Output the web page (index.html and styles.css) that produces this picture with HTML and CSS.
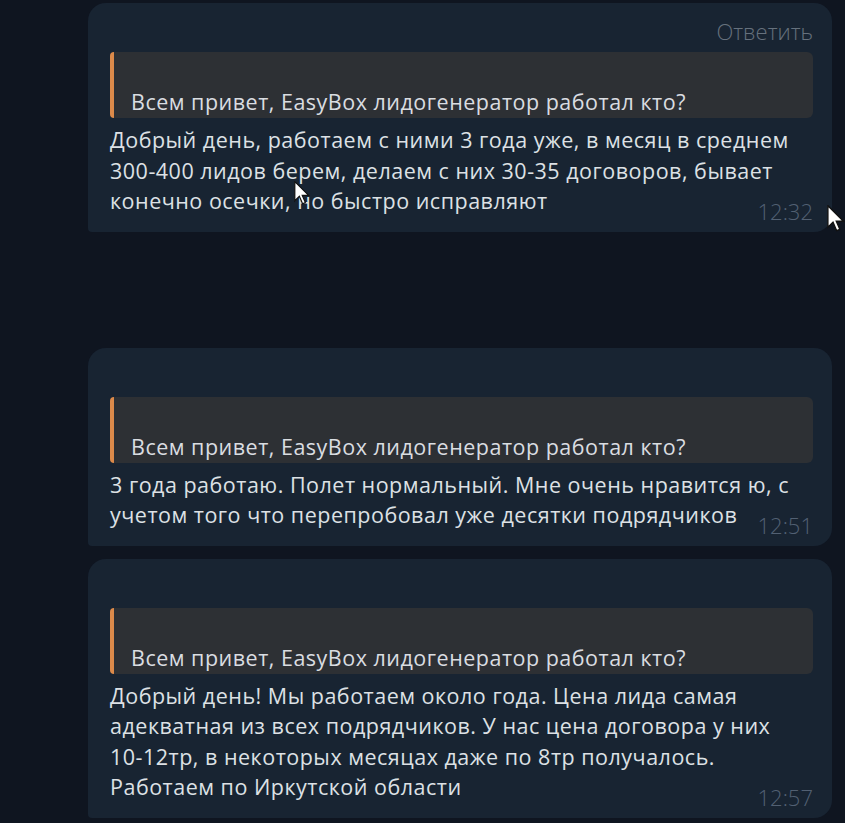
FILE: index.html
```html
<!DOCTYPE html>
<html lang="ru">
<head>
<meta charset="UTF-8">
<title>Отзывы</title>
<link rel="stylesheet" href="styles.css">
</head>
<body>
  <div class="chat">
    <div class="bubble first">
      <div class="bubble-head">Ответить</div>
      <div class="quote">Всем привет, EasyBox лидогенератор работал кто?</div>
      <p class="text">Добрый день, работаем с ними 3 года уже, в месяц в среднем<br>300-400 лидов берем, делаем с них 30-35 договоров, бывает<br>конечно осечки, но быстро исправляют</p>
      <div class="time">12:32</div>
    </div>

    <div class="bubble second">
      <div class="bubble-head"></div>
      <div class="quote">Всем привет, EasyBox лидогенератор работал кто?</div>
      <p class="text">3 года работаю. Полет нормальный. Мне очень нравится ю, с<br>учетом того что перепробовал уже десятки подрядчиков</p>
      <div class="time">12:51</div>
    </div>

    <div class="bubble third">
      <div class="bubble-head"></div>
      <div class="quote">Всем привет, EasyBox лидогенератор работал кто?</div>
      <p class="text">Добрый день! Мы работаем около года. Цена лида самая<br>адекватная из всех подрядчиков. У нас цена договора у них<br>10-12тр, в некоторых месяцах даже по 8тр получалось.<br>Работаем по Иркутской области</p>
      <div class="time">12:57</div>
    </div>
  </div>

  <!-- mouse pointers captured in the screenshot -->
  <svg class="cursor cursor-one" width="16" height="24" viewBox="0 0 13 20">
    <path d="M0.5 0.5 L0.5 16.5 L4.3 12.8 L7 19 L9.3 18 L6.7 12 L12 12 Z" fill="#ffffff" stroke="#111111" stroke-width="1"/>
  </svg>
  <svg class="cursor cursor-two" width="18" height="27" viewBox="0 0 13 20">
    <path d="M0.5 0.5 L0.5 16.5 L4.3 12.8 L7 19 L9.3 18 L6.7 12 L12 12 Z" fill="#ffffff" stroke="#111111" stroke-width="1"/>
  </svg>
</body>
</html>
```

FILE: styles.css
```css
/* page background, dark telegram theme */
body {
  margin: 0;
  background-color: #0f1520;
  font-family: "Open Sans", "Noto Sans", sans-serif;
  color: #dde1e5;
  height: 823px;
  overflow: hidden;
}

.chat {
  display: flex;
  flex-direction: column;
  padding: 3px 13px 0 88px;
}

/* one message bubble */
.bubble {
  background-color: #182432;
  border-radius: 18px 18px 18px 4px;
  padding: 0 19px 10px 22px;
}

.second {
  margin-top: 116px;
}

.third {
  margin-top: 13px;
}

/* top row, holds the "reply" label on the first bubble */
.bubble-head {
  height: 49px;
  text-align: right;
  font-size: 22px;
  line-height: 56px;
  color: #66717d;
  font-weight: 300;
}

/* quoted message */
.quote {
  background-color: #2d3034;
  border-left: 4px solid #dc8a4a;
  border-radius: 4px 6px 6px 4px;
  padding: 35px 10px 0 17px;
  height: 31px;
  font-size: 21.5px;
  letter-spacing: 0.5px;
  line-height: 29px;
  color: #dadde1;
  white-space: nowrap;
}

.text {
  margin: 7px 0 0 0;
  font-size: 21.5px;
  letter-spacing: 0.5px;
  line-height: 30.5px;
  white-space: nowrap;
}

/* time stamp in the bottom right corner */
.time {
  margin-top: -17px;
  text-align: right;
  font-size: 22px;
  line-height: 22px;
  color: #526072;
  font-weight: 300;
}

.cursor {
  position: absolute;
}

.cursor-one {
  left: 294px;
  top: 181px;
}

.cursor-two {
  left: 827px;
  top: 205px;
}
```
